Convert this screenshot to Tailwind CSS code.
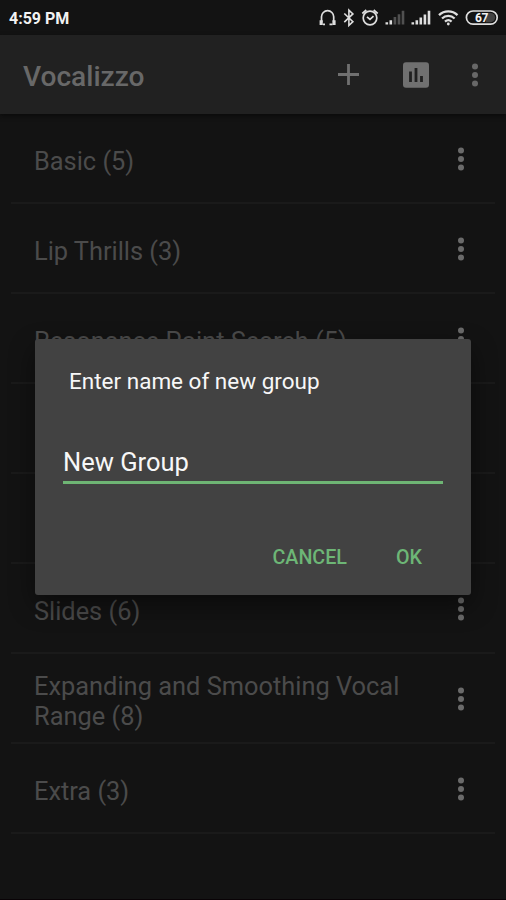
<!DOCTYPE html>
<html lang="en">
<head>
<meta charset="utf-8">
<title>Vocalizzo</title>
<script src="https://cdn.jsdelivr.net/npm/@tailwindcss/browser@4"></script>
</head>
<body class="bg-[#131313]">
<svg class="hidden">
  <symbol id="dots" viewBox="0 0 8 24"><circle cx="4" cy="3.5" r="3"/><circle cx="4" cy="12" r="3"/><circle cx="4" cy="20.5" r="3"/></symbol>
</svg>
<div class="relative w-[506px] h-[900px] overflow-hidden bg-[#131313] font-['Roboto',sans-serif] flex flex-col border-b border-[#090306]">
  <header class="h-[35px] shrink-0 flex items-center pl-[9px] bg-[#131313] text-[#f2f2f2]">
    <span class="w-[309px] text-[16px] leading-5 font-bold pt-[2px] whitespace-nowrap">4:59 PM</span>
    <svg class="w-[188px] h-[35px] shrink-0" viewBox="318 0 188 35" fill="none" stroke="#dedede">
      <path d="M321.500 22v-5.200a6 6 0 0 1 12.200 0V22" stroke-width="1.700"/>
      <path d="M321.200 20.200v4.800M334 20.200v4.800" stroke-width="3.200"/>
      <path d="M323 24.300h2M329.500 24.300h3" stroke-width="1.800"/>
      <path d="M344.300 13.500l8.600 8.200-4 3.800V10.200l4 3.700-8.600 8.200" stroke-width="1.600"/>
      <circle cx="370" cy="18" r="6.800" stroke-width="1.700"/>
      <path d="M362.300 13.500l4-3.500M373.700 10l4 3.500M367 16.800l3 2.600 3.500-3.200" stroke-width="1.700"/>
      <g stroke-width="2.600">
        <path d="M386.800 24.500v-2.200M390.800 24.500v-4.300"/>
        <path d="M394.900 24.500v-7.500M399 24.500v-10.300M403 24.500V10.800" stroke="#505050"/>
        <path d="M412.800 24.500v-2.200M416.800 24.500v-4.300M420.800 24.500v-7M424.900 24.500v-10M429 24.500V10.800"/>
      </g>
      <path d="M439 15.200c5.200-5 13.300-5 18.500 0M442 18.500c3.600-3.400 9-3.400 12.600 0M445 21.600c2-1.800 4.600-1.800 6.600 0" stroke-width="2.300"/>
      <circle cx="448.300" cy="24" r="1.400" fill="#dedede" stroke="none"/>
      <rect x="466.400" y="11" width="30.800" height="13.200" rx="6.600" stroke-width="1.700"/>
      <path d="M486 13h4.500a4.600 4.600 0 0 1 0 9.200H486z" fill="#444" stroke="none"/>
      <text x="481.500" y="21.800" text-anchor="middle" font-family="Roboto" font-weight="700" font-size="12" letter-spacing="-.5" fill="#f2f2f2" stroke="none">67</text>
    </svg>
  </header>
  <div class="h-[79px] shrink-0 flex items-center pl-[23px] bg-[#212121] shadow-[0_2px_4px_#0b0b0b] text-[#686868]">
    <h1 class="w-[315px] text-[28.1px] leading-8 font-medium pt-[4px]">Vocalizzo</h1>
    <svg class="w-[21px] h-[21px] shrink-0" viewBox="0 0 21 21" fill="none" stroke="#707070" stroke-width="2.800"><path d="M0 10.500h21M10.500 0v21"/></svg>
    <svg class="w-[26px] h-[26px] ml-[44px] shrink-0" viewBox="0 0 26 26"><rect width="26" height="25.500" y=".3" rx="3" fill="#707070"/><path d="M7.500 9.500v10.500M13 6v14M18.500 14v6" stroke="#212121" stroke-width="2.800"/></svg>
    <svg class="w-[8px] h-[24px] ml-[42px] shrink-0 fill-[#686868]"><use href="#dots"/></svg>
  </div>
  <ul class="shrink-0 px-[11px] text-[25.4px] leading-[30px] text-[#4b4b4b]">
    <li class="h-[90px] flex items-center border-b-2 border-[#1a1a1a] pl-[23px] pt-[2px]"><span class="w-[423px] pt-[4px] tracking-[-0.02px]">Basic (5)</span><svg class="w-[8px] h-[24px] shrink-0 fill-[#6a6a6a]"><use href="#dots"/></svg></li>
    <li class="h-[90px] flex items-center border-b-2 border-[#1a1a1a] pl-[23px] pt-[2px]"><span class="w-[423px] pt-[4px] tracking-[-0.02px]">Lip Thrills (3)</span><svg class="w-[8px] h-[24px] shrink-0 fill-[#6a6a6a]"><use href="#dots"/></svg></li>
    <li class="h-[90px] flex items-center border-b-2 border-[#1a1a1a] pl-[23px] pt-[2px]"><span class="w-[423px] pt-[4px]">Resonance Point Search (5)</span><svg class="w-[8px] h-[24px] shrink-0 fill-[#6a6a6a]"><use href="#dots"/></svg></li>
    <li class="h-[90px] border-b-2 border-[#1a1a1a]"></li>
    <li class="h-[90px] border-b-2 border-[#1a1a1a]"></li>
    <li class="h-[90px] flex items-center border-b-2 border-[#1a1a1a] pl-[23px] pt-[2px]"><span class="w-[423px] pt-[4px] tracking-[-0.02px]">Slides (6)</span><svg class="w-[8px] h-[24px] shrink-0 fill-[#6a6a6a]"><use href="#dots"/></svg></li>
    <li class="h-[90px] flex items-center border-b-2 border-[#1a1a1a] pl-[23px] pt-[2px]"><span class="w-[423px] pt-[4px]">Expanding and Smoothing Vocal<br>Range (8)</span><svg class="w-[8px] h-[24px] shrink-0 fill-[#6a6a6a]"><use href="#dots"/></svg></li>
    <li class="h-[90px] flex items-center border-b-2 border-[#1a1a1a] pl-[23px] pt-[2px]"><span class="w-[423px] pt-[4px] tracking-[-0.02px]">Extra (3)</span><svg class="w-[8px] h-[24px] shrink-0 fill-[#6a6a6a]"><use href="#dots"/></svg></li>
  </ul>
  <div role="dialog" class="absolute left-[35px] top-[339px] w-[436px] h-[256px] rounded-[3px] bg-[#424242] shadow-[0_10px_26px_rgba(0,0,0,0.45)] flex flex-col px-[28px]">
    <h2 class="mt-[28px] ml-[6px] text-[22.5px] leading-[28px] text-[#f7f7f7] whitespace-nowrap">Enter name of new group</h2>
    <div class="mt-[51px] h-[38px] border-b-[3px] border-[#6eb574] text-[25.5px] leading-[32px] text-[#f7f7f7]">New Group</div>
    <div class="mt-[61px] flex justify-end gap-[49px] pr-[21px] text-[19.7px] leading-[26px] font-medium text-[#6db676]"><span>CANCEL</span><span>OK</span></div>
  </div>
</div>
</body>
</html>
